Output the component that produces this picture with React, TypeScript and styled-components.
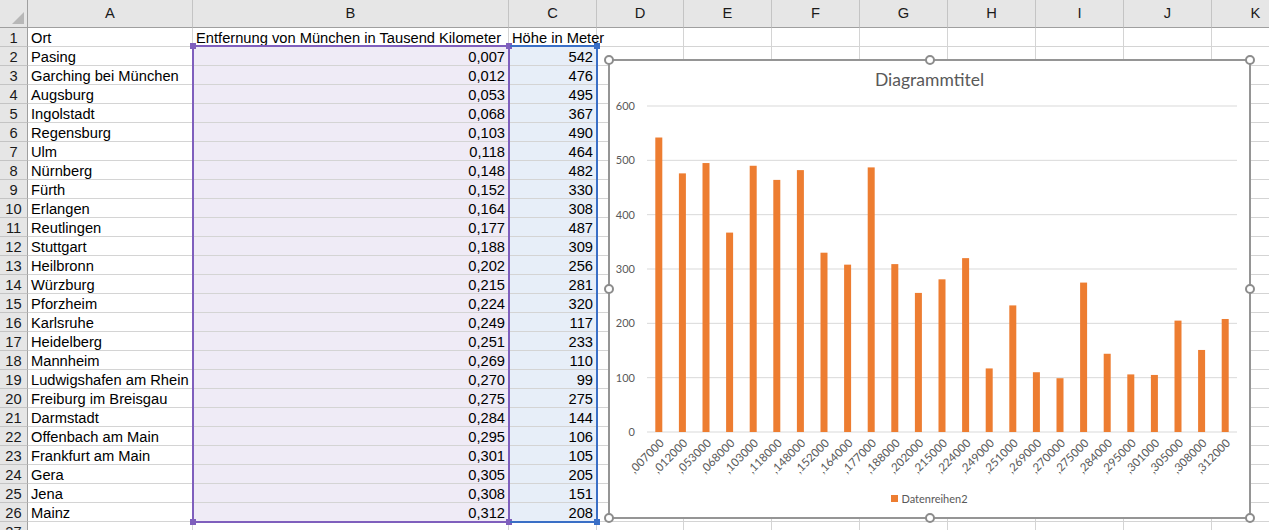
import React from 'react'
import styled, { createGlobalStyle } from 'styled-components'

const GlobalStyle = createGlobalStyle`
  html, body {
    margin: 0;
    padding: 0;
    background: #ffffff;
    overflow: hidden;
  }
  body {
    font-family: 'Liberation Sans', Arial, sans-serif;
  }
`

const COL_WIDTHS = [28, 165, 316, 88, 87, 88, 88, 88, 88, 88, 88, 88]
const COL_LETTERS = ['A', 'B', 'C', 'D', 'E', 'F', 'G', 'H', 'I', 'J', 'K']

const PURPLE = '#7f5fbd'
const BLUE = '#3a6fc6'
const ORANGE = '#ed7d31'

const rows: [string, string, number][] = [
  ['Pasing', '0,007', 542],
  ['Garching bei München', '0,012', 476],
  ['Augsburg', '0,053', 495],
  ['Ingolstadt', '0,068', 367],
  ['Regensburg', '0,103', 490],
  ['Ulm', '0,118', 464],
  ['Nürnberg', '0,148', 482],
  ['Fürth', '0,152', 330],
  ['Erlangen', '0,164', 308],
  ['Reutlingen', '0,177', 487],
  ['Stuttgart', '0,188', 309],
  ['Heilbronn', '0,202', 256],
  ['Würzburg', '0,215', 281],
  ['Pforzheim', '0,224', 320],
  ['Karlsruhe', '0,249', 117],
  ['Heidelberg', '0,251', 233],
  ['Mannheim', '0,269', 110],
  ['Ludwigshafen am Rhein', '0,270', 99],
  ['Freiburg im Breisgau', '0,275', 275],
  ['Darmstadt', '0,284', 144],
  ['Offenbach am Main', '0,295', 106],
  ['Frankfurt am Main', '0,301', 105],
  ['Gera', '0,305', 205],
  ['Jena', '0,308', 151],
  ['Mainz', '0,312', 208],
]

const Page = styled.div`
  position: relative;
  width: 1269px;
  height: 530px;
  overflow: hidden;
  background: #ffffff;
`

const Sheet = styled.div`
  display: grid;
  grid-template-columns: ${COL_WIDTHS.map((w) => `${w}px`).join(' ')};
  grid-template-rows: 28px;
  grid-auto-rows: 19px;
  font-size: 14.7px;
  color: #000000;
`

const CornerCell = styled.div`
  background: #e6e6e6;
  border-right: 1px solid #9f9f9f;
  border-bottom: 1px solid #9f9f9f;
  display: flex;
  align-items: flex-end;
  justify-content: flex-end;
  padding: 0 3px 3px 0;
  box-sizing: border-box;
`

const ColHeader = styled.div`
  background: #e6e6e6;
  border-right: 1px solid #c4c4c4;
  border-bottom: 1px solid #9f9f9f;
  box-sizing: border-box;
  text-align: center;
  line-height: 27px;
  color: #1a1a1a;
`

const RowHeader = styled.div`
  background: #e6e6e6;
  border-right: 1px solid #9f9f9f;
  border-bottom: 1px solid #c4c4c4;
  box-sizing: border-box;
  text-align: center;
  padding-top: 1px;
  line-height: 18px;
  color: #1a1a1a;
`

const Cell = styled.div<{ $align?: 'left' | 'right'; $tint?: string }>`
  border-right: 1px solid #d4d4d4;
  border-bottom: 1px solid #d4d4d4;
  box-sizing: border-box;
  padding: 1px 3px 0;
  line-height: 18px;
  white-space: nowrap;
  overflow: visible;
  text-align: ${({ $align }) => $align || 'left'};
  background: ${({ $tint }) => $tint || 'transparent'};
`

const SelectionBox = styled.div<{ $left: number; $width: number; $color: string; $openLeft?: boolean }>`
  position: absolute;
  top: 45px;
  left: ${({ $left }) => $left}px;
  width: ${({ $width }) => $width}px;
  height: 478px;
  box-sizing: border-box;
  border: 2px solid ${({ $color }) => $color};
  ${({ $openLeft }) => ($openLeft ? 'border-left: none;' : '')}
  pointer-events: none;
`

const SelectionHandle = styled.div<{ $color: string; $v: 'top' | 'bottom'; $h: 'left' | 'right' }>`
  position: absolute;
  width: 6px;
  height: 6px;
  background: ${({ $color }) => $color};
  ${({ $v }) => $v}: -4px;
  ${({ $h }) => $h}: -4px;
`

const ChartFrame = styled.div`
  position: absolute;
  left: 608px;
  top: 59px;
  width: 643px;
  height: 460px;
  box-sizing: border-box;
  border: 2px solid #959595;
  background: #ffffff;
  display: flex;
  flex-direction: column;
  font-family: Lato, 'Open Sans', sans-serif;
  color: #595959;
`

const ChartTitle = styled.div`
  height: 38px;
  line-height: 38px;
  text-align: center;
  font-size: 17.5px;
`

const Plot = styled.svg`
  display: block;
  width: 639px;
  height: 389px;
`

const Legend = styled.div`
  height: 20px;
  margin-bottom: 9px;
  display: flex;
  align-items: center;
  justify-content: center;
  gap: 3px;
  font-size: 11px;
`

const LegendSwatch = styled.span`
  width: 7px;
  height: 7px;
  background: ${ORANGE};
`

const HandleLayer = styled.div`
  position: absolute;
  inset: -1px;
  pointer-events: none;
`

const FrameHandle = styled.div<{ $x: number; $y: number }>`
  position: absolute;
  left: ${({ $x }) => $x}%;
  top: ${({ $y }) => $y}%;
  width: 10px;
  height: 10px;
  box-sizing: border-box;
  border-radius: 50%;
  border: 2px solid #8c8c8c;
  background: #ffffff;
  transform: translate(-50%, -50%);
`

function CornerTriangle() {
  return (
    <svg width="12" height="12" viewBox="0 0 12 12">
      <polygon points="12,0 12,12 0,12" fill="#b7b7b7" />
    </svg>
  )
}

function BarChart() {
  const x0 = 37
  const x1 = 627
  const y0 = 333
  const scale = 326 / 600
  const slot = (x1 - x0) / rows.length
  const ticks = [0, 100, 200, 300, 400, 500, 600]
  return (
    <Plot viewBox="0 0 639 389">
      {ticks.map((t) => {
        const y = y0 - t * scale
        return (
          <g key={t}>
            <line x1={x0} x2={x1} y1={y} y2={y} stroke="#d9d9d9" strokeWidth="1" />
            <text x={25} y={y + 4} textAnchor="end" fontSize="11" fill="#595959">
              {t}
            </text>
          </g>
        )
      })}
      {rows.map(([, dist, h], i) => {
        const cx = x0 + (i + 0.5) * slot
        const bh = h * scale
        const label = ',' + dist.split(',')[1] + '000'
        return (
          <g key={i}>
            <rect x={cx - 3.5} y={y0 - bh} width={7} height={bh} fill={ORANGE} />
            <text
              transform={`translate(${cx + 3}, ${y0 + 9}) rotate(-45)`}
              textAnchor="end"
              dy="0.35em"
              fontSize="11.5"
              fill="#595959"
            >
              {label}
            </text>
          </g>
        )
      })}
    </Plot>
  )
}

export default function App() {
  const handles: [number, number][] = [
    [0, 0], [50, 0], [100, 0],
    [0, 50], [100, 50],
    [0, 100], [50, 100], [100, 100],
  ]
  return (
    <Page>
      <GlobalStyle />
      <Sheet>
        <CornerCell>
          <CornerTriangle />
        </CornerCell>
        {COL_LETTERS.map((l) => (
          <ColHeader key={l}>{l}</ColHeader>
        ))}

        <RowHeader>1</RowHeader>
        <Cell>Ort</Cell>
        <Cell>Entfernung von München in Tausend Kilometer</Cell>
        <Cell>Höhe in Meter</Cell>
        {COL_LETTERS.slice(3).map((l) => (
          <Cell key={l} />
        ))}

        {rows.map(([city, dist, h], i) => (
          <React.Fragment key={city}>
            <RowHeader>{i + 2}</RowHeader>
            <Cell>{city}</Cell>
            <Cell $align="right" $tint="#efebf6">{dist}</Cell>
            <Cell $align="right" $tint="#e7eef8">{h}</Cell>
            {COL_LETTERS.slice(3).map((l) => (
              <Cell key={l} />
            ))}
          </React.Fragment>
        ))}

        <RowHeader>27</RowHeader>
        {COL_LETTERS.map((l) => (
          <Cell key={l} />
        ))}
      </Sheet>

      <SelectionBox $left={192} $width={318} $color={PURPLE}>
        <SelectionHandle $color={PURPLE} $v="top" $h="left" />
        <SelectionHandle $color={PURPLE} $v="top" $h="right" />
        <SelectionHandle $color={PURPLE} $v="bottom" $h="left" />
        <SelectionHandle $color={PURPLE} $v="bottom" $h="right" />
      </SelectionBox>
      <SelectionBox $left={510} $width={88} $color={BLUE} $openLeft>
        <SelectionHandle $color={BLUE} $v="top" $h="right" />
        <SelectionHandle $color={BLUE} $v="bottom" $h="right" />
      </SelectionBox>

      <ChartFrame>
        <ChartTitle>Diagrammtitel</ChartTitle>
        <BarChart />
        <Legend>
          <LegendSwatch />
          <span>Datenreihen2</span>
        </Legend>
        <HandleLayer>
          {handles.map(([x, y]) => (
            <FrameHandle key={`${x}-${y}`} $x={x} $y={y} />
          ))}
        </HandleLayer>
      </ChartFrame>
    </Page>
  )
}
